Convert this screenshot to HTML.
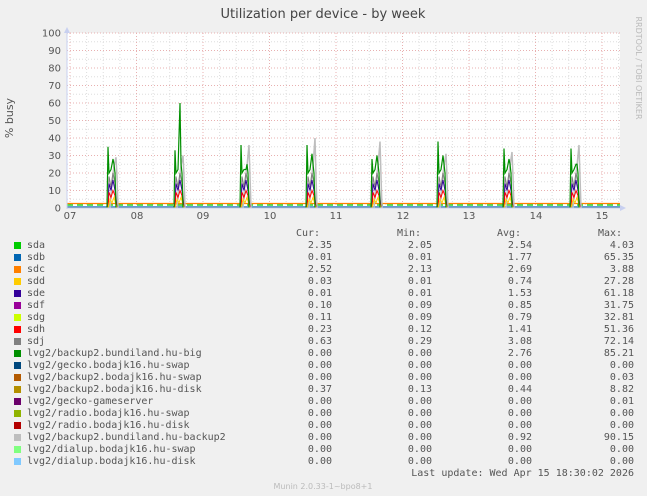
<!DOCTYPE html>
<html><head><meta charset="utf-8"><style>
body{margin:0;width:647px;height:496px;background:#f0f0f0;overflow:hidden;position:relative;font-family:"DejaVu Sans","Liberation Sans",sans-serif;color:#444}
.t{position:absolute;white-space:pre}
.lg{position:absolute;left:0;top:0;width:647px;height:496px;font-family:"DejaVu Sans Mono","Liberation Mono",monospace;font-size:10px;color:#555}
.sw{position:absolute;width:7px;height:7px}
</style></head><body>
<svg width="647" height="496" style="position:absolute;left:0;top:0" xmlns="http://www.w3.org/2000/svg">
<rect x="67" y="33" width="553" height="175" fill="#fff"/>
<g id="grid"></g>
<g id="data" fill="none" stroke-width="1.2"></g>
<line x1="67" y1="208" x2="624" y2="208" stroke="#c8d0f0" stroke-width="1"/>
<line x1="67" y1="28" x2="67" y2="209" stroke="#c8d0f0" stroke-width="1"/>
<polygon points="620,205 626,208 620,211" fill="#c8d0f0"/>
<polygon points="64,33 67,27 70,33" fill="#c8d0f0"/>
<text x="323" y="18" font-size="13" text-anchor="middle" fill="#444" font-family="DejaVu Sans,sans-serif">Utilization per device - by week</text>
<text transform="translate(13,118) rotate(-90)" font-size="11" text-anchor="middle" fill="#555" font-family="DejaVu Sans,sans-serif">% busy</text>
<text transform="translate(636,68) rotate(90)" font-size="8" text-anchor="middle" fill="#bbb" font-family="DejaVu Sans,sans-serif">RRDTOOL / TOBI OETIKER</text>
<g id="ylab" font-size="10" fill="#555" text-anchor="end" font-family="DejaVu Sans,sans-serif"></g>
<g id="xlab" font-size="10" fill="#555" text-anchor="middle" font-family="DejaVu Sans,sans-serif"></g>
<text x="323" y="489" font-size="8" text-anchor="middle" fill="#bbb" font-family="DejaVu Sans,sans-serif">Munin 2.0.33-1~bpo8+1</text>
</svg>
<div id="leg"></div>
<script>
var NS="http://www.w3.org/2000/svg";
function el(p,t,a,txt){var e=document.createElementNS(NS,t);for(var k in a)e.setAttribute(k,a[k]);if(txt!=null)e.textContent=txt;document.getElementById(p).appendChild(e);return e;}
for(var i=0;i<=20;i++){var y=208-i*8.75;if(i==0)continue;el('grid','line',{x1:67,x2:620,y1:y,y2:y,stroke:i%2==0?'#e8b0b0':'#ddd','stroke-dasharray':'1,2','stroke-width':1});}
var days=[70,137,203,270,336,403,469,536,602];
for(var d=-1;d<9;d++){for(var q=0;q<4;q++){var x=70+d*66.5+q*16.625;if(x<=67||x>=620)continue;el('grid','line',{x1:x,x2:x,y1:33,y2:208,stroke:q==0?'#e8b0b0':'#ddd','stroke-dasharray':'1,2','stroke-width':1});}}
for(var i=0;i<=10;i++)el('ylab','text',{x:61,y:208-i*17.5+3.5},String(i*10));
var xl=['07','08','09','10','11','12','13','14','15'];
for(var i=0;i<9;i++)el('xlab','text',{x:days[i],y:219},xl[i]);
el('data','line',{x1:67,x2:620,y1:203.5,y2:203.5,stroke:'#FF8000'});
el('data','line',{x1:67,x2:620,y1:205,y2:205,stroke:'#00CC00','stroke-dasharray':'6,4'});
el('data','line',{x1:67,x2:620,y1:207,y2:207,stroke:'#0066B3'});
el('data','line',{x1:67,x2:620,y1:207.5,y2:207.5,stroke:'#808080','stroke-width':0.6});
var peaks=[[108,35,28,29],[175,33,60,30],[241,36,22,36],[307,36,31,40],[372,28,30,38],[438,38,30,31],[504,34,28,32],[571,34,25,36]];
function Y(v){return 208-v*1.75;}
peaks.forEach(function(p){var s=p[0];
 el('data','polyline',{points:[s+2,208,s+4,Y(15),s+6,Y(24),s+8,Y(p[3]),s+9,Y(18),s+10,208].join(' '),stroke:'#BEBEBE','stroke-width':1.5});
 el('data','polyline',{points:[s,208,s+1,Y(18),s+3,Y(12),s+5,Y(20),s+7,Y(14),s+9,208].join(' '),stroke:'#808080','stroke-width':1});
 el('data','polyline',{points:[s,208,s+1,Y(14),s+3,Y(10),s+5,Y(16),s+7,Y(10),s+9,208].join(' '),stroke:'#330099','stroke-width':1});
 el('data','polyline',{points:[s,208,s+1,Y(9),s+3,Y(6),s+5,Y(10),s+7,Y(7),s+9,208].join(' '),stroke:'#FF0000','stroke-width':1});
 el('data','polyline',{points:[s,208,s+2,Y(5),s+4,Y(3),s+6,Y(6),s+9,208].join(' '),stroke:'#FFCC00','stroke-width':1});
 el('data','polyline',{points:[s-1,208,s,Y(p[1]),s+1,Y(20),s+3,Y(22),s+5,Y(p[2]),s+6,Y(25),s+7,Y(20),s+8,208].join(' '),stroke:'#008F00'});
});
var rows=[['#00CC00','sda','2.35','2.05','2.54','4.03'],['#0066B3','sdb','0.01','0.01','1.77','65.35'],['#FF8000','sdc','2.52','2.13','2.69','3.88'],['#FFCC00','sdd','0.03','0.01','0.74','27.28'],['#330099','sde','0.01','0.01','1.53','61.18'],['#990099','sdf','0.10','0.09','0.85','31.75'],['#CCFF00','sdg','0.11','0.09','0.79','32.81'],['#FF0000','sdh','0.23','0.12','1.41','51.36'],['#808080','sdj','0.63','0.29','3.08','72.14'],['#008F00','lvg2/backup2.bundiland.hu-big','0.00','0.00','2.76','85.21'],['#00487D','lvg2/gecko.bodajk16.hu-swap','0.00','0.00','0.00','0.00'],['#B35A00','lvg2/backup2.bodajk16.hu-swap','0.00','0.00','0.00','0.03'],['#B38F00','lvg2/backup2.bodajk16.hu-disk','0.37','0.13','0.44','8.82'],['#6B006B','lvg2/gecko-gameserver','0.00','0.00','0.00','0.01'],['#8FB300','lvg2/radio.bodajk16.hu-swap','0.00','0.00','0.00','0.00'],['#B30000','lvg2/radio.bodajk16.hu-disk','0.00','0.00','0.00','0.00'],['#BEBEBE','lvg2/backup2.bundiland.hu-backup2','0.00','0.00','0.92','90.15'],['#80FF80','lvg2/dialup.bodajk16.hu-swap','0.00','0.00','0.00','0.00'],['#80C9FF','lvg2/dialup.bodajk16.hu-disk','0.00','0.00','0.00','0.00']];
var h='<div class="lg">';
h+='<div class="t" style="left:296px;top:228px">Cur:</div><div class="t" style="left:397px;top:228px">Min:</div><div class="t" style="left:497px;top:228px">Avg:</div><div class="t" style="left:598px;top:228px">Max:</div>';
rows.forEach(function(r,i){var y=240+i*12;
h+='<div class="sw" style="left:14px;top:'+(y+2)+'px;background:'+r[0]+'"></div>';
h+='<div class="t" style="left:27px;top:'+y+'px">'+r[1]+'</div>';
var ends=[332,432,532,634];
for(var k=0;k<4;k++)h+='<div class="t" style="right:'+(647-ends[k])+'px;top:'+y+'px">'+r[k+2]+'</div>';
});
h+='<div class="t" style="right:13px;top:468px">Last update: Wed Apr 15 18:30:02 2026</div></div>';
document.getElementById('leg').innerHTML=h;
</script>
</body></html>
